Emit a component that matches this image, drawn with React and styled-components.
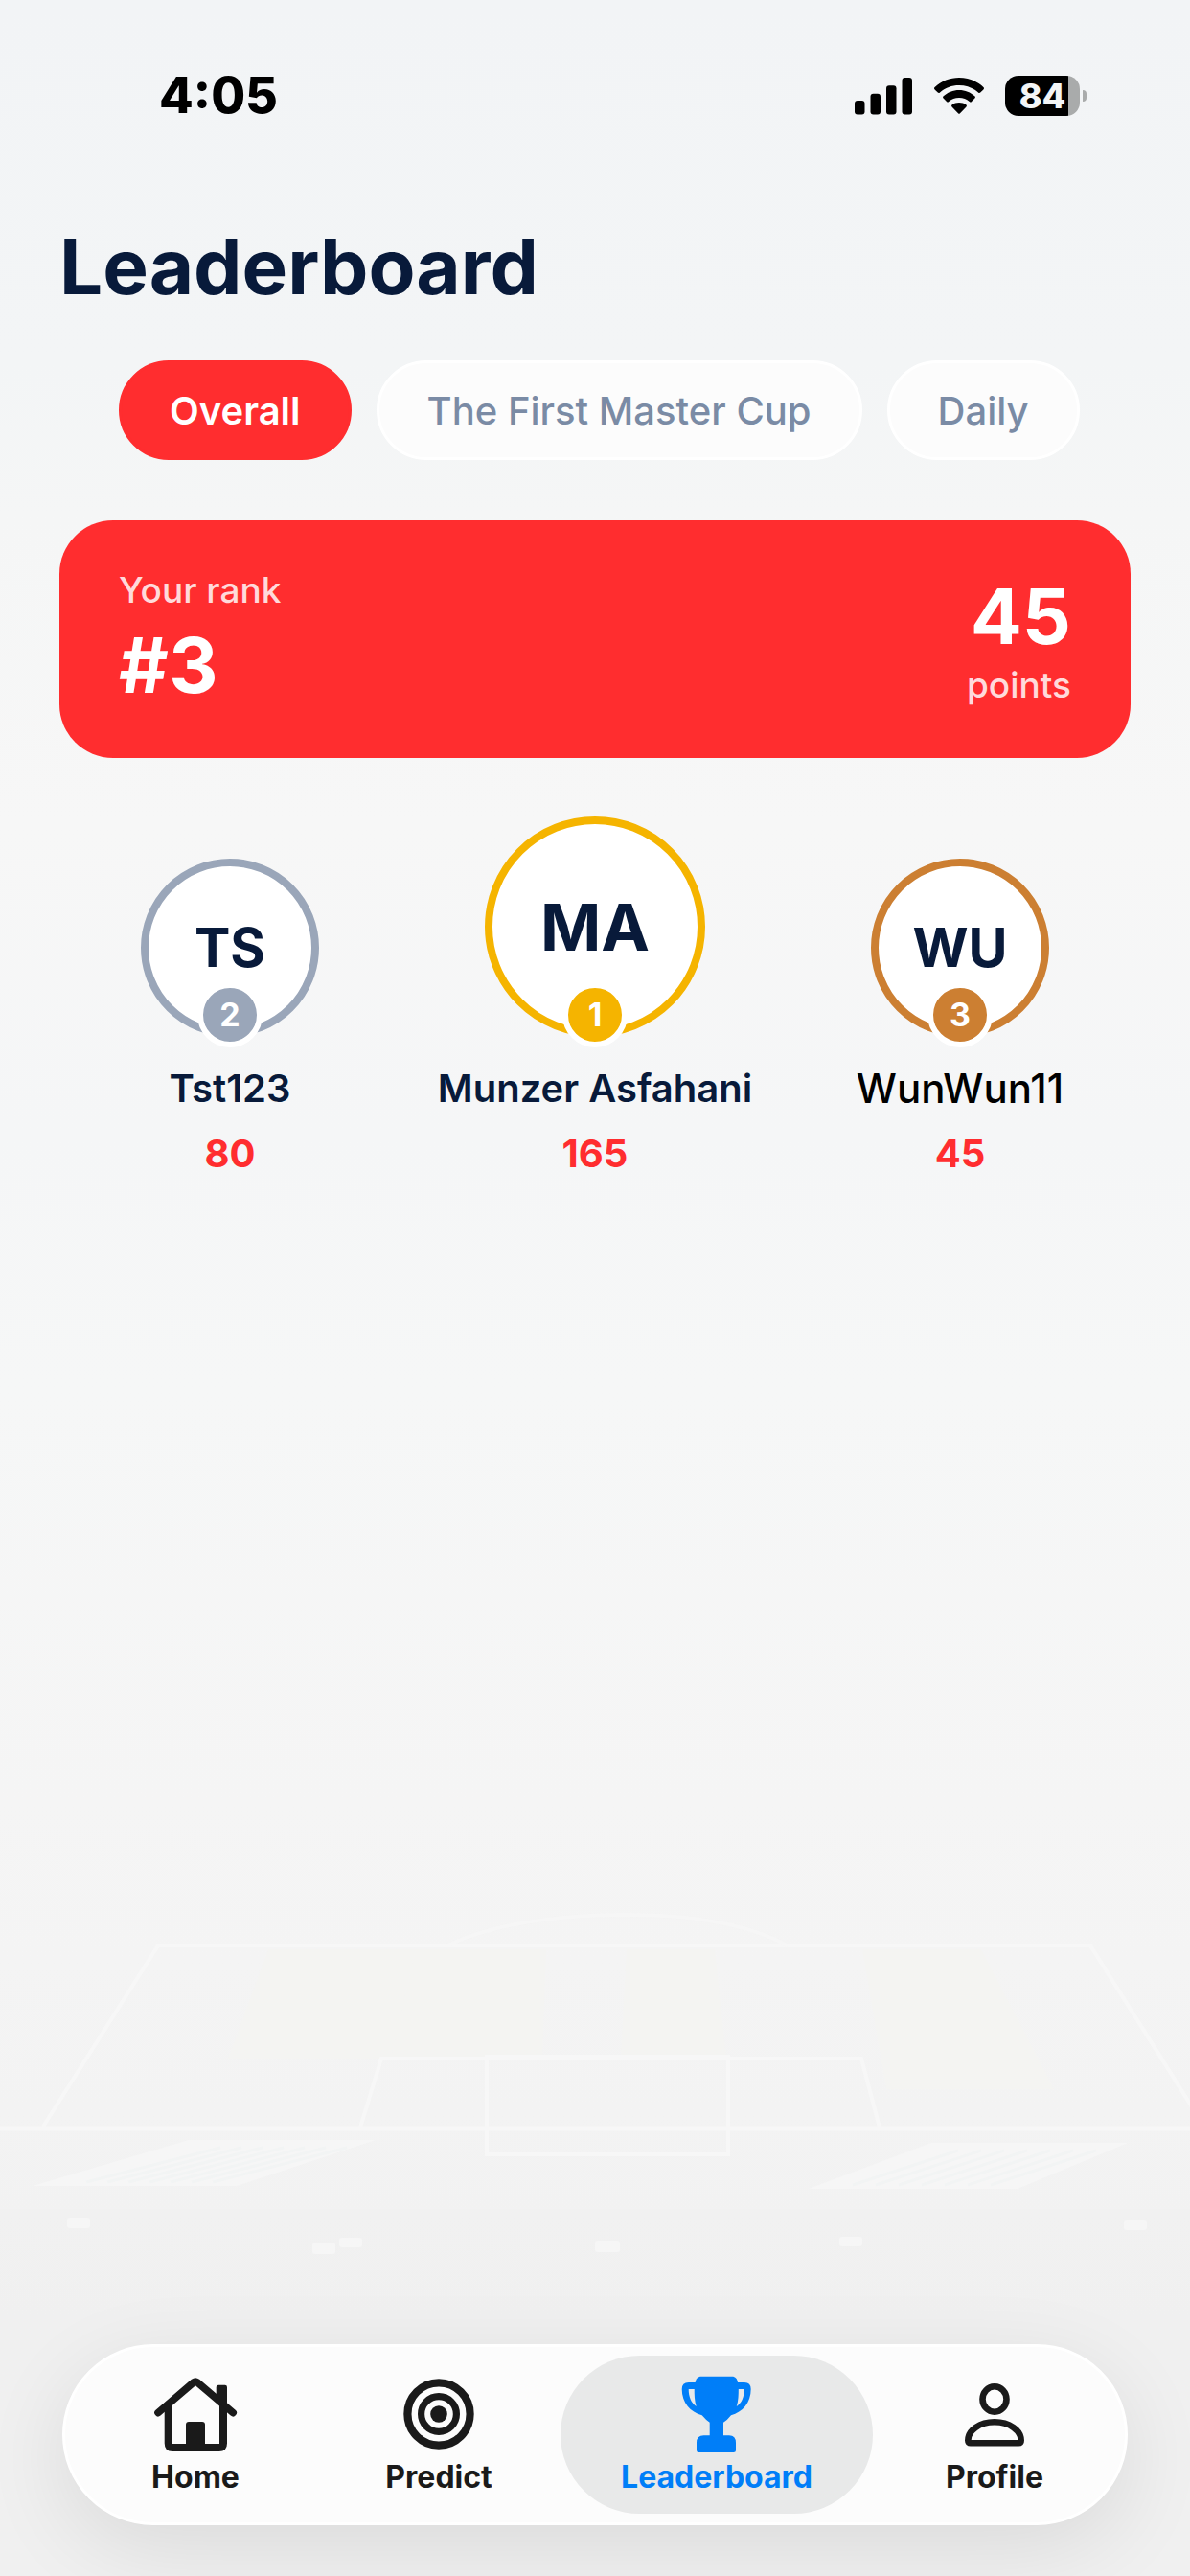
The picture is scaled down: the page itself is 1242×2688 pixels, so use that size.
import React, { useState } from "react";
import styled, { createGlobalStyle, css } from "styled-components";

const RED = "#ff2d2f";
const NAVY = "#081a3a";
const SLATE = "#7a8ba5";
const BLUE = "#007ef8";
const INK = "#1a1a1a";

const TABS = ["Overall", "The First Master Cup", "Daily"];

const PODIUM = [
  { place: 2, initials: "TS", name: "Tst123", score: 80, color: "#9aa6b9" },
  {
    place: 1,
    initials: "MA",
    name: "Munzer Asfahani",
    score: 165,
    color: "#f5b400",
  },
  {
    place: 3,
    initials: "WU",
    name: "WunWun11",
    score: 45,
    color: "#cc7f32",
    plain: true,
  },
];

const HomeIcon = () => (
  <svg width="88" height="88" viewBox="0 0 88 88" fill="none" aria-hidden="true">
    <path
      d="M5 39.6 42.2 7.8Q44 6.4 45.8 7.8L83.2 39.6"
      stroke="currentColor"
      strokeWidth="7.6"
      strokeLinecap="round"
    />
    <path
      d="M15.7 30V71.5Q15.7 76 20 76H68.7Q73 76 73 71.5V30"
      stroke="currentColor"
      strokeWidth="8"
    />
    <path
      d="M65.7 27V13Q65.7 10.8 68 10.8H74.8Q77 10.8 77 13V37Z"
      fill="currentColor"
    />
    <path d="M34 78V52Q34 49 37 49H51Q54 49 54 52V78Z" fill="currentColor" />
  </svg>
);

const TargetIcon = () => (
  <svg width="88" height="88" viewBox="0 0 88 88" fill="none" aria-hidden="true">
    <circle cx="44" cy="41" r="32.6" stroke="currentColor" strokeWidth="8.2" />
    <circle cx="44" cy="41" r="18.4" stroke="currentColor" strokeWidth="7.2" />
    <circle cx="44" cy="41" r="8.8" fill="currentColor" />
  </svg>
);

const TrophyIcon = () => (
  <svg width="88" height="88" viewBox="0 0 88 88" aria-hidden="true">
    <path
      fill="currentColor"
      fillRule="evenodd"
      d="M28 1.7H60C63.5 1.7 65.5 4 66 8H73Q79.7 8 79.7 15C79.7 29 71 39 59 42.3Q55 47.5 51 49.7V63.3H57Q64 63.3 64 71V78.5Q64 81 61.5 81H25.5Q23 81 23 78.5V71Q23 63.3 30.5 63.3H36.7V49.7Q33 47.5 28.7 42.3C16.5 39 7.7 29 7.7 15Q7.7 8 14.7 8H21.7C22.2 4 24.2 1.7 28 1.7ZM14.7 15C14.7 23 17.5 29.5 22.7 33C20.8 27 20.7 21 20.7 15ZM72.8 15C72.8 23 70 29.5 64.8 33C66.7 27 66.8 21 66.8 15Z"
    />
  </svg>
);

const ProfileIcon = () => (
  <svg width="88" height="88" viewBox="0 0 88 88" fill="none" aria-hidden="true">
    <ellipse
      cx="44"
      cy="25.5"
      rx="12.5"
      ry="13.2"
      stroke="currentColor"
      strokeWidth="6.6"
    />
    <path
      d="M19 71.3Q16.3 71.3 16.3 68.5C16.3 58 28.5 49.3 44 49.3S71.7 58 71.7 68.5Q71.7 71.3 69 71.3Z"
      stroke="currentColor"
      strokeWidth="6.6"
    />
  </svg>
);

const NAV = [
  { label: "Home", Icon: HomeIcon },
  { label: "Predict", Icon: TargetIcon },
  { label: "Leaderboard", Icon: TrophyIcon, active: true },
  { label: "Profile", Icon: ProfileIcon },
];

const SignalIcon = () => (
  <svg width="61" height="40" viewBox="0 0 61 40" aria-hidden="true">
    <rect x="0" y="25" width="10.5" height="14.5" rx="3" />
    <rect x="16.5" y="17.7" width="10.5" height="21.8" rx="3" />
    <rect x="33" y="9.3" width="10.5" height="30.2" rx="3" />
    <rect x="49.5" y="1" width="10.5" height="38.5" rx="3" />
  </svg>
);

const WifiIcon = () => (
  <svg width="54" height="40" viewBox="0 0 54 40" aria-hidden="true">
    <path d="M1.6 13.4Q.4 12.2 1.6 11C8.4 4.6 17.3 1 27 1S45.6 4.6 52.4 11Q53.6 12.2 52.4 13.4L49.2 16.6Q48.2 17.6 47 16.5C41.7 11.6 34.7 9 27 9S12.3 11.6 7 16.5Q5.8 17.6 4.8 16.6Z" />
    <path d="M10.6 22.5Q9.5 21.4 10.7 20.3C15 16.3 20.7 14 27 14S39 16.3 43.3 20.3Q44.5 21.4 43.4 22.5L40 25.9Q39 26.9 37.8 25.9C34.9 23.4 31.2 22 27 22S19.1 23.4 16.2 25.9Q15 26.9 14 25.9Z" />
    <path d="M19.5 31.4Q18.4 30.3 19.7 29.3C21.7 27.8 24.2 27 27 27S32.3 27.8 34.3 29.3Q35.6 30.3 34.5 31.4L28 38.2Q27 39.2 26 38.2Z" />
  </svg>
);

// faint pitch behind the whole screen
const Pitch = () => (
  <Backdrop
    viewBox="0 0 1242 2688"
    preserveAspectRatio="xMidYMax slice"
    aria-hidden="true"
  >
    <g fill="#f4f4f2">
      <path d="M280 2034H434L408 2148H238Z" />
      <path d="M434 2034H570L566 2146H408Z" />
      <path d="M654 2034H746L758 2146H648Z" />
      <path d="M900 2034H1024L1100 2180H925Z" />
    </g>
    <path d="M0 2305H1242V2688H0Z" fill="#f0f0f0" opacity="0.5" />
    <g fill="none" stroke="#f7f7f7" strokeWidth="4">
      <path d="M45 2219 165 2030H1138L1245 2200" />
      <path d="M467 2030Q530 2000 644 1998T822 2030" opacity="0.5" />
      <path d="M376 2220 398 2148H899L918 2220" />
      <path d="M508 2248V2146H760V2248Z" />
      <path d="M0 2221H1242" strokeWidth="5" />
    </g>
    <g fill="#f6f6f6">
      <path d="M197 2233H392L247 2281H34Z" />
      <path d="M972 2236H1177L1062 2284H844Z" />
      <rect x="70" y="2314" width="24" height="11" rx="3" />
      <rect x="326" y="2340" width="24" height="12" rx="3" />
      <rect x="354" y="2335" width="24" height="10" rx="3" />
      <rect x="621" y="2338" width="26" height="12" rx="3" />
      <rect x="876" y="2334" width="24" height="10" rx="3" />
      <rect x="1173" y="2317" width="24" height="10" rx="3" />
    </g>
    <g stroke="#f2f4f4" strokeWidth="3">
      <path d="M230 2241 90 2277M252 2241 112 2277M274 2241 134 2277M296 2241 156 2277M318 2241 178 2277M340 2241 200 2277M362 2241 222 2277" />
      <path d="M1000 2244 890 2280M1024 2244 914 2280M1048 2244 938 2280M1072 2244 962 2280M1096 2244 986 2280M1120 2244 1010 2280M1144 2244 1034 2280" />
    </g>
  </Backdrop>
);

export default function App() {
  const [tab, setTab] = useState("Overall");

  return (
    <Screen>
      <GlobalStyle />
      <Pitch />
      <StatusBar>
        <Time>4:05</Time>
        <StatusIcons>
          <SignalIcon />
          <WifiIcon />
          <BatteryWrap>
            <Battery>84</Battery>
            <BatteryTip />
          </BatteryWrap>
        </StatusIcons>
      </StatusBar>
      <Main>
        <Title>Leaderboard</Title>
        <Tabs>
          {TABS.map((name) => (
            <Tab
              key={name}
              type="button"
              $active={name === tab}
              onClick={() => setTab(name)}
            >
              {name}
            </Tab>
          ))}
        </Tabs>
        <RankCard>
          <RankColumn $gap={6}>
            <RankLabel>Your rank</RankLabel>
            <RankValue>#3</RankValue>
          </RankColumn>
          <RankColumn $right>
            <RankValue>45</RankValue>
            <RankLabel>points</RankLabel>
          </RankColumn>
        </RankCard>
        <Podium>
          {PODIUM.map(({ place, initials, name, score, color, plain }) => (
            <Player key={place}>
              <Avatar $color={color} $first={place === 1}>
                {initials}
                <Badge $color={color}>{place}</Badge>
              </Avatar>
              <Name $plain={plain}>{name}</Name>
              <Score>{score}</Score>
            </Player>
          ))}
        </Podium>
      </Main>
      <NavBar>
        {NAV.map(({ label, Icon, active }) => (
          <NavItem key={label} href={`#${label.toLowerCase()}`} $active={active}>
            <Icon />
            <span>{label}</span>
          </NavItem>
        ))}
      </NavBar>
    </Screen>
  );
}

const GlobalStyle = createGlobalStyle`
  * {
    box-sizing: border-box;
  }
  body {
    margin: 0;
    font-family: Inter, "Liberation Sans", sans-serif;
    background: #f0f0f0;
  }
`;

const Screen = styled.div`
  position: relative;
  isolation: isolate;
  display: flex;
  flex-direction: column;
  min-height: 100vh;
  overflow: hidden;
  background: linear-gradient(
    #f2f4f6 0%,
    #f3f5f6 14%,
    #f5f6f6 20%,
    #f7f7f7 32%,
    #f5f6f7 44%,
    #f6f7f7 54%,
    #f5f5f5 70%,
    #f3f3f3 82%,
    #f1f1f1 90%,
    #f0f0f0 100%
  );
`;

const Backdrop = styled.svg`
  position: absolute;
  inset: 0;
  z-index: -1;
  width: 100%;
  height: 100%;
`;

const StatusBar = styled.div`
  display: flex;
  align-items: center;
  justify-content: space-between;
  height: 200px;
  padding: 0 108px 0 166px;
  color: #000;
`;

const Time = styled.span`
  font-size: 52px;
  line-height: 60px;
  font-weight: 800;
`;

const StatusIcons = styled.div`
  display: flex;
  align-items: center;
  gap: 21px;
`;

const BatteryWrap = styled.div`
  display: flex;
  align-items: center;
  gap: 3px;
`;

const Battery = styled.div`
  width: 78px;
  height: 42px;
  border-radius: 14px;
  background: linear-gradient(90deg, #000 84%, #a9abab 84%);
  color: #f3f5f6;
  font-size: 36px;
  line-height: 42px;
  font-weight: 800;
  text-align: center;
`;

const BatteryTip = styled.div`
  width: 4px;
  height: 12px;
  border-radius: 0 6px 6px 0;
  background: #a9abab;
`;

const Main = styled.main`
  display: flex;
  flex-direction: column;
  padding: 30px 62px 0;
`;

const Title = styled.h1`
  margin: 0 0 50px;
  font-size: 80px;
  line-height: 96px;
  font-weight: 700;
  color: ${NAVY};
`;

const Tabs = styled.div`
  display: flex;
  gap: 26px;
  margin-bottom: 63px;
  padding-left: 62px;
`;

const Tab = styled.button`
  height: 104px;
  padding: 0 50px;
  border: 3px solid ${({ $active }) => ($active ? RED : "#fff")};
  border-radius: 52px;
  background: ${({ $active }) => ($active ? RED : "#fcfcfc")};
  color: ${({ $active }) => ($active ? "#fff" : SLATE)};
  font-family: inherit;
  font-size: 40px;
  font-weight: ${({ $active }) => ($active ? 600 : 500)};
  white-space: nowrap;
  cursor: pointer;
`;

const RankCard = styled.section`
  display: flex;
  align-items: center;
  justify-content: space-between;
  height: 248px;
  margin-bottom: 61px;
  padding: 0 62px;
  border-radius: 56px;
  background: ${RED};
  color: #fff;
`;

const RankColumn = styled.div`
  display: flex;
  flex-direction: column;
  gap: ${({ $gap = 0 }) => $gap}px;
  align-items: ${({ $right }) => ($right ? "flex-end" : "flex-start")};
`;

const RankLabel = styled.span`
  font-size: 37px;
  line-height: 48px;
  font-weight: 500;
  color: #ffdadb;
`;

const RankValue = styled.strong`
  font-size: 80px;
  line-height: 96px;
  font-weight: 700;
`;

const Podium = styled.div`
  display: grid;
  grid-template-columns: repeat(3, 1fr);
  column-gap: 25px;
  align-items: end;
`;

const Player = styled.div`
  display: flex;
  flex-direction: column;
  align-items: center;
`;

const Avatar = styled.div`
  position: relative;
  display: flex;
  align-items: center;
  justify-content: center;
  width: 186px;
  height: 186px;
  margin-bottom: 28px;
  border: 8px solid ${({ $color }) => $color};
  border-radius: 50%;
  background: #fff;
  color: ${NAVY};
  font-size: 56px;
  font-weight: 700;
  ${({ $first }) =>
    $first &&
    css`
      width: 230px;
      height: 230px;
      font-size: 68px;
    `}
`;

const Badge = styled.span`
  position: absolute;
  left: 50%;
  bottom: -19px;
  width: 68px;
  height: 68px;
  margin-left: -34px;
  border: 6px solid #fff;
  border-radius: 50%;
  background: ${({ $color }) => $color};
  color: #fff;
  font-size: 34px;
  line-height: 56px;
  text-align: center;
`;

const Name = styled.span`
  margin-bottom: 16px;
  font-size: 40px;
  line-height: 52px;
  font-weight: 600;
  color: ${NAVY};
  white-space: nowrap;
  ${({ $plain }) =>
    $plain &&
    css`
      font-size: 42px;
      font-weight: 500;
      color: #000;
    `}
`;

const Score = styled.span`
  font-size: 40px;
  line-height: 52px;
  font-weight: 700;
  color: ${RED};
`;

const NavBar = styled.nav`
  display: flex;
  margin: auto 65px 53px;
  padding: 9px;
  border: 3px solid #fff;
  border-radius: 96px;
  background: #fcfcfc;
  box-shadow: 0 24px 90px rgba(0, 0, 0, 0.09);
`;

const NavItem = styled.a`
  display: flex;
  flex: 1;
  flex-direction: column;
  align-items: center;
  gap: 1px;
  padding: 20px 0;
  border-radius: 84px;
  color: ${INK};
  font-size: 32px;
  line-height: 36px;
  font-weight: 700;
  text-decoration: none;
  ${({ $active }) =>
    $active &&
    css`
      flex: none;
      padding: 20px 63px;
      background: #e8e9e9;
      color: ${BLUE};
    `}
`;
